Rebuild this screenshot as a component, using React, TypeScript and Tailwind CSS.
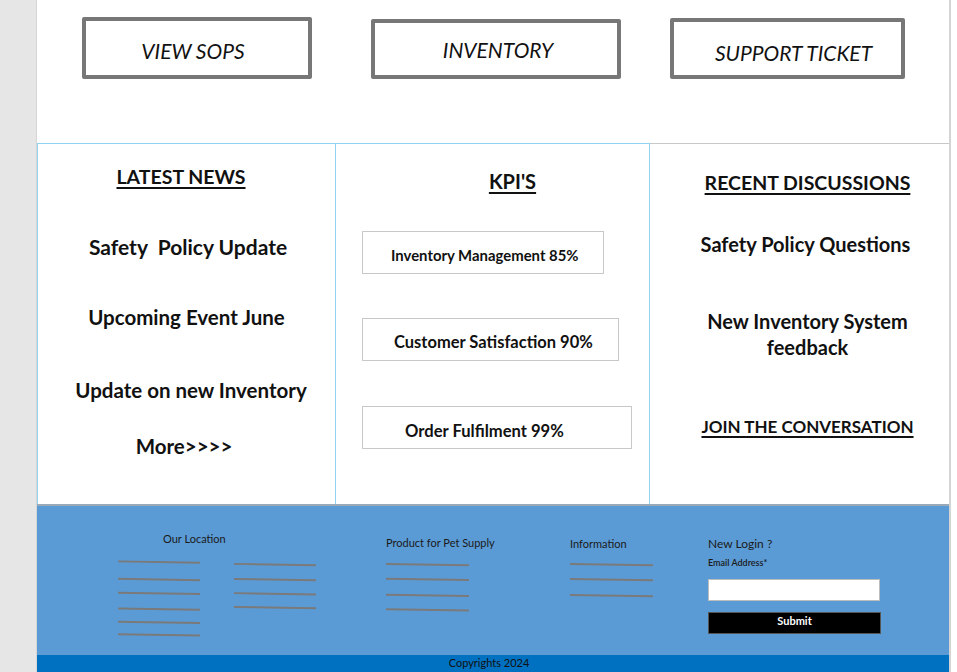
import React from 'react';

const font = { fontFamily: 'Lato, "Open Sans", Arial, sans-serif' };

const Lines: React.FC<{ lines: number[]; height: number }> = ({ lines, height }) => (
    <svg width="84" height={height} viewBox={`0 0 84 ${height}`} className="block">
        {lines.map((y, i) => (
            <line key={i} x1="0" y1={y} x2="83" y2={y + 1.3} stroke="#7a7a7a" strokeWidth="2" />
        ))}
    </svg>
);

const NavButton: React.FC<{ label: string; className: string; textClass?: string }> = ({ label, className, textClass }) => (
    <div className={`flex items-center justify-center border-[4px] border-[#777777] rounded-[2px] ${className}`}>
        <span className={`italic text-[21px] text-[#111] ${textClass ?? ''}`}>{label}</span>
    </div>
);

const KpiBox: React.FC<{ label: string; className: string; textClass: string }> = ({ label, className, textClass }) => (
    <div className={`h-[43px] border border-[#c8c8c8] flex items-center ${className}`}>
        <span className={`font-bold text-[#111] ${textClass}`}>{label}</span>
    </div>
);

export default function App() {
    return (
        <div className="w-[957px] h-[672px] overflow-hidden flex bg-[#fafafa]" style={font}>
            <div className="w-[37px] bg-[#e6e6e6] border-r border-[#d6d6d6]" />
            <div className="w-[912px] flex flex-col bg-white">
                {/* top nav buttons */}
                <div className="h-[143px] flex items-start pl-[45px]">
                    <NavButton label="VIEW SOPS" className="w-[230px] h-[62px] mt-[17px]" textClass="mt-[5px] pr-[8px]" />
                    <NavButton label="INVENTORY" className="w-[250px] h-[60px] mt-[19px] ml-[59px]" textClass="pl-[4px] mt-[1px]" />
                    <NavButton label="SUPPORT TICKET" className="w-[235px] h-[61px] mt-[18px] ml-[49px]" textClass="mt-[8px] pl-[12px]" />
                </div>

                {/* three columns */}
                <div className="h-[363px] grid grid-cols-[299px_314px_299px] border-t border-[#8fd3f0] border-b-2 border-b-[#9aa9b8]">
                    <div className="flex flex-col items-center border-l border-r border-[#8fd3f0] font-bold text-[#111]">
                        <div className="mt-[20px] leading-[26px] text-[19.5px] underline underline-offset-[3px] decoration-[1.5px] pr-[11px]">LATEST NEWS</div>
                        <div className="mt-[44px] leading-[26px] text-[21px] pl-[3px] whitespace-pre">Safety  Policy Update</div>
                        <div className="mt-[44px] leading-[26px] text-[20.5px]">Upcoming Event June</div>
                        <div className="mt-[47px] leading-[26px] text-[20.5px] pl-[9px]">Update on new Inventory</div>
                        <div className="mt-[30px] leading-[26px] text-[20.5px] pr-[5px]">More&gt;&gt;&gt;&gt;</div>
                    </div>
                    <div className="flex flex-col border-r border-[#8fd3f0] pl-[26px] text-[#111]">
                        <div className="mt-[24px] leading-[26px] text-[20px] font-bold underline underline-offset-[3px] decoration-[1.5px] self-center pl-[14px]">KPI'S</div>
                        <KpiBox label="Inventory Management 85%" className="mt-[37px] w-[242px] pl-[28px] pt-[5px]" textClass="text-[14.9px]" />
                        <KpiBox label="Customer Satisfaction 90%" className="mt-[44px] w-[257px] pl-[31px] pt-[5px]" textClass="text-[16.5px]" />
                        <KpiBox label="Order Fulfilment 99%" className="mt-[45px] w-[270px] pl-[42px] pt-[7px]" textClass="text-[16.6px]" />
                    </div>
                    <div className="flex flex-col items-center pl-[16px] font-bold text-[#111] border-t border-[#c8c8c8] -mt-px">
                        <div className="mt-[26px] leading-[26px] text-[19.5px] underline underline-offset-[3px] decoration-[1.5px]">RECENT DISCUSSIONS</div>
                        <div className="mt-[35px] leading-[26px] text-[20px] pr-[4px]">Safety Policy Questions</div>
                        <div className="mt-[51px] leading-[26px] text-[20px] text-center">
                            New Inventory System
                            <br />
                            feedback
                        </div>
                        <div className="mt-[54px] leading-[26px] text-[17px] underline underline-offset-[3px] decoration-[1.5px]">JOIN THE CONVERSATION</div>
                    </div>
                </div>

                {/* footer */}
                <div className="h-[149px] bg-[#5b9bd5] flex pl-[81px] text-[#1a1a1a]">
                    <div className="w-[199px] pt-[26px]">
                        <div className="text-[11px] leading-[14px] ml-[45px]">Our Location</div>
                        <div className="flex gap-[33px]">
                            <Lines lines={[15, 32.7, 46.7, 62.7, 76, 88.7]} height={92} />
                            <Lines lines={[17.7, 33, 47.3, 61.3]} height={64} />
                        </div>
                    </div>
                    <div className="ml-[69px] w-[83px] pt-[30px]">
                        <div className="text-[11px] leading-[14px] whitespace-nowrap">Product for Pet Supply</div>
                        <Lines lines={[14, 28.7, 44.7, 59.3]} height={62} />
                    </div>
                    <div className="ml-[101px] w-[83px] pt-[31px]">
                        <div className="text-[11px] leading-[14px]">Information</div>
                        <Lines lines={[13, 28, 44]} height={48} />
                    </div>
                    <div className="ml-[55px] w-[173px] pt-[30px] flex flex-col">
                        <div className="text-[12px] leading-[15px]">New Login ?</div>
                        <div className="mt-[6px] text-[9px] leading-[11px] font-semibold">Email Address*</div>
                        <div className="mt-[11px] w-[172px] h-[22px] bg-white border border-[#bdbdbd]" />
                        <button className="mt-[11px] w-[173px] h-[22px] bg-black border border-[#555] text-white text-[11px] font-bold leading-[14px] pb-[4px]">
                            Submit
                        </button>
                    </div>
                </div>
                <div className="h-[17px] bg-[#0070c0] flex items-center justify-center pr-[8px] text-[11px] text-[#111]">
                    Copyrights 2024
                </div>
            </div>
            <div className="flex-1 bg-white border-l-2 border-[#d4d4d4]" />
        </div>
    );
}
